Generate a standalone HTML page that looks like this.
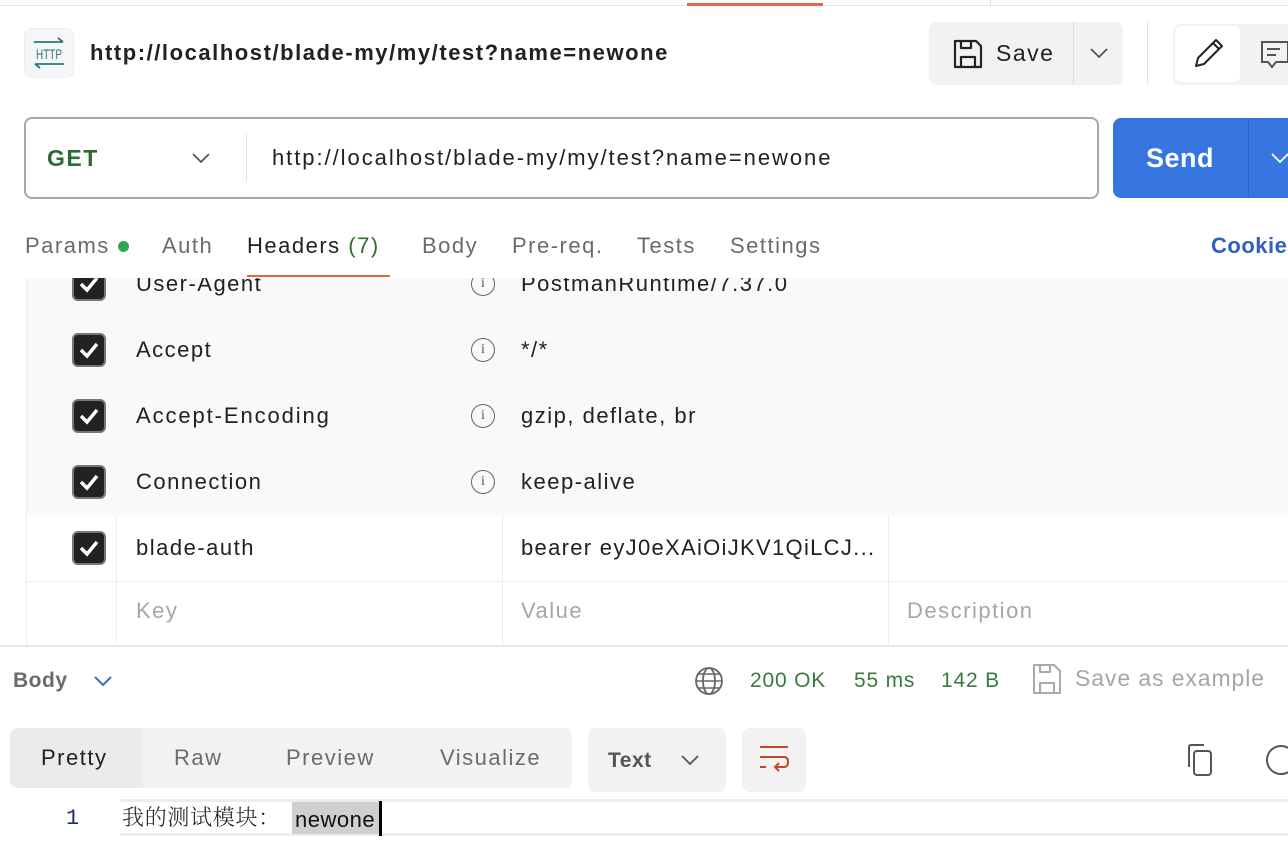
<!DOCTYPE html>
<html><head><meta charset="utf-8">
<style>
*{box-sizing:border-box;margin:0;padding:0}
html,body{width:1288px;height:857px;overflow:hidden}
body{background:#fff;font-family:"Liberation Sans","Noto Sans CJK SC",sans-serif;position:relative;color:#212121}
.a{position:absolute}
.t{position:absolute;white-space:nowrap;line-height:1;letter-spacing:1.5px}
.cb{position:absolute;left:72px;width:34px;height:34px;background:#222;border:2px solid #777;border-radius:6px}
.cb svg{position:absolute;left:4px;top:5px}
.info{position:absolute;left:471px;width:24px;height:24px;border:1.6px solid #666;border-radius:50%;font:14px "Liberation Serif",serif;color:#555;text-align:center;line-height:21px}
</style></head><body>
<div class="a" style="left:0;top:5px;width:1288px;height:1px;background:#e6e6e6"></div>
<div class="a" style="left:687px;top:3px;width:136px;height:3px;background:#e2674a"></div>
<div class="a" style="left:990px;top:0;width:1px;height:5px;background:#ddd"></div>

<div class="a" style="left:24px;top:28px;width:50px;height:50px;background:#f4f6f7;border-radius:8px;border:1px solid #eceeef"></div>
<svg class="a" style="left:24px;top:28px" width="50" height="50">
<path d="M10 14 H39 M34 10 L39 14" stroke="#2b7a78" stroke-width="1.8" fill="none"/>
<text x="25" y="31" font-family="Liberation Sans Narrow,Liberation Sans,sans-serif" font-size="14" fill="#2b7a78" text-anchor="middle" textLength="26" lengthAdjust="spacingAndGlyphs">HTTP</text>
<path d="M11 36 H40 M11 36 L16 40" stroke="#2b7a78" stroke-width="1.8" fill="none"/>
</svg>
<div class="t" style="left:90px;top:42px;font-size:22px;font-weight:bold;color:#212121;letter-spacing:1.55px">http://localhost/blade-my/my/test?name=newone</div>

<div class="a" style="left:929px;top:22px;width:194px;height:63px;background:#f2f2f2;border-radius:8px"></div>
<div class="a" style="left:1073px;top:22px;width:1px;height:63px;background:#ddd"></div>
<svg class="a" style="left:953px;top:39px" width="30" height="30" viewBox="0 0 30 30"><path d="M2 2 H23 L28 7 V28 H2 Z M8 2 V9 H18 V2 M8 28 V18 H22 V28" stroke="#222" stroke-width="2.2" fill="none" stroke-linejoin="round"/></svg>
<div class="t" style="left:996px;top:42px;font-size:23px;color:#222">Save</div>
<svg class="a" style="left:1089px;top:46px" width="20" height="14"><path d="M2 3 L10 11 L18 3" stroke="#555" stroke-width="1.8" fill="none"/></svg>
<div class="a" style="left:1147px;top:22px;width:1px;height:63px;background:#e3e3e3"></div>
<div class="a" style="left:1173px;top:24px;width:115px;height:61px;background:#f2f2f2;border-radius:8px 0 0 8px"></div>
<div class="a" style="left:1175px;top:26px;width:65px;height:56px;background:#fff;border-radius:6px"></div>
<svg class="a" style="left:1192px;top:38px" width="32" height="32"><path d="M4 28 L6 20 L24 2 L30 8 L12 26 Z M21 5 L27 11" stroke="#222" stroke-width="2" fill="none" stroke-linejoin="round"/></svg>
<svg class="a" style="left:1260px;top:40px" width="28" height="30"><path d="M2 2 H28 V22 H16 L12 27 L8 22 H2 Z M7 9 H20 M7 15 H16" stroke="#555" stroke-width="2" fill="none"/></svg>

<div class="a" style="left:24px;top:117px;width:1075px;height:82px;border:2px solid #a8a8a8;border-radius:8px"></div>
<div class="t" style="left:47px;top:147px;font-size:23px;font-weight:bold;color:#2e6b30">GET</div>
<svg class="a" style="left:190px;top:151px" width="22" height="14"><path d="M3 3 L11 11 L19 3" stroke="#555" stroke-width="1.8" fill="none"/></svg>
<div class="a" style="left:246px;top:134px;width:1px;height:48px;background:#e3e3e3"></div>
<div class="t" style="left:272px;top:147px;font-size:22px;color:#212121;letter-spacing:1.95px">http://localhost/blade-my/my/test?name=newone</div>
<div class="a" style="left:1113px;top:118px;width:175px;height:80px;background:#3776e0;border-radius:8px 0 0 8px"></div>
<div class="a" style="left:1248px;top:118px;width:1px;height:80px;background:#2d66c4"></div>
<div class="t" style="left:1146px;top:145px;font-size:27px;font-weight:bold;color:#fff;letter-spacing:0.5px">Send</div>
<svg class="a" style="left:1270px;top:151px" width="18" height="14"><path d="M2 3 L10 11 L18 3" stroke="#fff" stroke-width="1.8" fill="none"/></svg>

<div class="t" style="left:25px;top:235px;font-size:22px;color:#6b6b6b">Params</div>
<div class="a" style="left:118px;top:241px;width:11px;height:11px;border-radius:50%;background:#2fa84f"></div>
<div class="t" style="left:162px;top:235px;font-size:22px;color:#6b6b6b">Auth</div>
<div class="t" style="left:247px;top:235px;font-size:22px;color:#212121">Headers <span style="color:#2e6b30">(7)</span></div>
<div class="a" style="left:247px;top:275px;width:143px;height:2px;background:#e2674a"></div>
<div class="t" style="left:422px;top:235px;font-size:22px;color:#6b6b6b">Body</div>
<div class="t" style="left:512px;top:235px;font-size:22px;color:#6b6b6b">Pre-req.</div>
<div class="t" style="left:637px;top:235px;font-size:22px;color:#6b6b6b">Tests</div>
<div class="t" style="left:730px;top:235px;font-size:22px;color:#6b6b6b">Settings</div>
<div class="t" style="left:1211px;top:235px;font-size:22px;font-weight:bold;color:#2f5fbf;letter-spacing:0.5px">Cookies</div>

<div class="a" style="left:0;top:278px;width:1288px;height:370px;overflow:hidden">
 <div style="position:absolute;left:0;top:-278px;width:1288px;height:648px">
  <div class="a" style="left:26px;top:251px;width:1262px;height:264px;background:#f9f9f9"></div>
  <div class="a" style="left:26px;top:251px;width:1px;height:400px;background:#ececec"></div>
  <div class="a" style="left:116px;top:515px;width:1px;height:131px;background:#ededed"></div>
  <div class="a" style="left:502px;top:515px;width:1px;height:131px;background:#ededed"></div>
  <div class="a" style="left:888px;top:515px;width:1px;height:131px;background:#ededed"></div>
  <div class="a" style="left:26px;top:581px;width:1262px;height:1px;background:#ededed"></div>
  <div class="a" style="left:0;top:645px;width:1288px;height:2px;background:#e8e8e8"></div>

  <div class="cb" style="top:267px"><svg width="22" height="20"><path d="M3 10 L9 16 L19 4" stroke="#fff" stroke-width="3.5" fill="none"/></svg></div>
  <div class="t" style="left:136px;top:273px;font-size:22px">User-Agent</div>
  <div class="info" style="top:272px">i</div>
  <div class="t" style="left:521px;top:273px;font-size:22px">PostmanRuntime/7.37.0</div>

  <div class="cb" style="top:333px"><svg width="22" height="20"><path d="M3 10 L9 16 L19 4" stroke="#fff" stroke-width="3.5" fill="none"/></svg></div>
  <div class="t" style="left:136px;top:339px;font-size:22px">Accept</div>
  <div class="info" style="top:338px">i</div>
  <div class="t" style="left:521px;top:339px;font-size:22px">*/*</div>

  <div class="cb" style="top:399px"><svg width="22" height="20"><path d="M3 10 L9 16 L19 4" stroke="#fff" stroke-width="3.5" fill="none"/></svg></div>
  <div class="t" style="left:136px;top:405px;font-size:22px;letter-spacing:1.9px">Accept-Encoding</div>
  <div class="info" style="top:404px">i</div>
  <div class="t" style="left:521px;top:405px;font-size:22px">gzip, deflate, br</div>

  <div class="cb" style="top:465px"><svg width="22" height="20"><path d="M3 10 L9 16 L19 4" stroke="#fff" stroke-width="3.5" fill="none"/></svg></div>
  <div class="t" style="left:136px;top:471px;font-size:22px">Connection</div>
  <div class="info" style="top:470px">i</div>
  <div class="t" style="left:521px;top:471px;font-size:22px">keep-alive</div>

  <div class="cb" style="top:531px"><svg width="22" height="20"><path d="M3 10 L9 16 L19 4" stroke="#fff" stroke-width="3.5" fill="none"/></svg></div>
  <div class="t" style="left:136px;top:537px;font-size:22px">blade-auth</div>
  <div class="t" style="left:521px;top:537px;font-size:22px;letter-spacing:1.3px">bearer eyJ0eXAiOiJKV1QiLCJ...</div>

  <div class="t" style="left:136px;top:600px;font-size:22px;color:#a6a6a6">Key</div>
  <div class="t" style="left:521px;top:600px;font-size:22px;color:#a6a6a6">Value</div>
  <div class="t" style="left:907px;top:600px;font-size:22px;color:#a6a6a6">Description</div>
 </div>
</div>

<div class="t" style="left:13px;top:670px;font-size:21px;font-weight:bold;color:#6b6b6b;letter-spacing:0.5px">Body</div>
<svg class="a" style="left:93px;top:674px" width="20" height="14"><path d="M2 3 L10 11 L18 3" stroke="#3a6cc4" stroke-width="2" fill="none"/></svg>
<svg class="a" style="left:694px;top:666px" width="30" height="30" viewBox="0 0 30 30"><circle cx="15" cy="15" r="13" stroke="#666" stroke-width="1.8" fill="none"/><ellipse cx="15" cy="15" rx="6" ry="13" stroke="#666" stroke-width="1.8" fill="none"/><path d="M2 15 H28 M4 8 H26 M4 22 H26" stroke="#666" stroke-width="1.6"/></svg>
<div class="t" style="left:750px;top:670px;font-size:21px;color:#3b7a3e;letter-spacing:0.8px">200 OK</div>
<div class="t" style="left:854px;top:670px;font-size:21px;color:#3b7a3e;letter-spacing:0.8px">55 ms</div>
<div class="t" style="left:941px;top:670px;font-size:21px;color:#3b7a3e;letter-spacing:0.8px">142 B</div>
<svg class="a" style="left:1032px;top:663px" width="30" height="32" viewBox="0 0 30 32"><path d="M2 2 H22 L28 8 V30 H2 Z M8 2 V9 H18 V2 M8 30 V20 H22 V30" stroke="#aaa" stroke-width="2" fill="none" stroke-linejoin="round"/></svg>
<div class="t" style="left:1075px;top:667px;font-size:23px;color:#a6a6a6;letter-spacing:0.9px">Save as example</div>

<div class="a" style="left:10px;top:728px;width:562px;height:60px;background:#f2f2f2;border-radius:8px"></div>
<div class="a" style="left:10px;top:728px;width:133px;height:60px;background:#ebebeb;border-radius:8px 0 0 8px"></div>
<div class="t" style="left:41px;top:747px;font-size:22px;color:#212121">Pretty</div>
<div class="t" style="left:174px;top:747px;font-size:22px;color:#6b6b6b">Raw</div>
<div class="t" style="left:286px;top:747px;font-size:22px;color:#6b6b6b">Preview</div>
<div class="t" style="left:440px;top:747px;font-size:22px;color:#6b6b6b">Visualize</div>
<div class="a" style="left:588px;top:728px;width:138px;height:64px;background:#f2f2f2;border-radius:8px"></div>
<div class="t" style="left:608px;top:750px;font-size:21px;font-weight:bold;color:#555;letter-spacing:0.5px">Text</div>
<svg class="a" style="left:680px;top:753px" width="20" height="14"><path d="M2 3 L10 11 L18 3" stroke="#555" stroke-width="1.8" fill="none"/></svg>
<div class="a" style="left:742px;top:728px;width:64px;height:64px;background:#f2f2f2;border-radius:8px"></div>
<svg class="a" style="left:758px;top:744px" width="32" height="32" viewBox="0 0 32 32"><path d="M2 3 H30 M2 13 H26 Q30 13 30 18 Q30 23 26 23 H18 M21 19 L17 23 L21 27 M2 23 H8" stroke="#c5472a" stroke-width="2" fill="none"/></svg>
<svg class="a" style="left:1185px;top:743px" width="32" height="34" viewBox="0 0 32 34"><rect x="9" y="8" width="17" height="24" rx="3" stroke="#555" stroke-width="2" fill="none"/><path d="M4 24 V4 Q4 2 6 2 H19" stroke="#555" stroke-width="2" fill="none"/></svg>
<div class="a" style="left:1266px;top:745px;width:22px;height:30px;overflow:hidden"><div style="width:30px;height:30px;border:2px solid #555;border-radius:50%"></div></div>

<div class="a" style="left:120px;top:799px;width:1168px;height:37px;background:#fff;border-top:3px solid #ececec;border-bottom:3px solid #ececec"></div>
<div class="t" style="left:66px;top:808px;font-size:22px;color:#1b2f6b;font-family:'Liberation Mono',monospace">1</div>
<div class="a" style="left:292px;top:802px;width:88px;height:32px;background:#cfcfcf"></div>
<div class="a" style="left:379px;top:801px;width:3px;height:35px;background:#000"></div>
<div class="t" style="left:122px;top:806px;font-size:22px;color:#222;font-family:'Noto Serif CJK SC',serif;letter-spacing:0.7px;font-weight:300">我的测试模块：</div>
<div class="t" style="left:295px;top:809px;font-size:22px;color:#111;letter-spacing:0.5px">newone</div>
</body></html>
